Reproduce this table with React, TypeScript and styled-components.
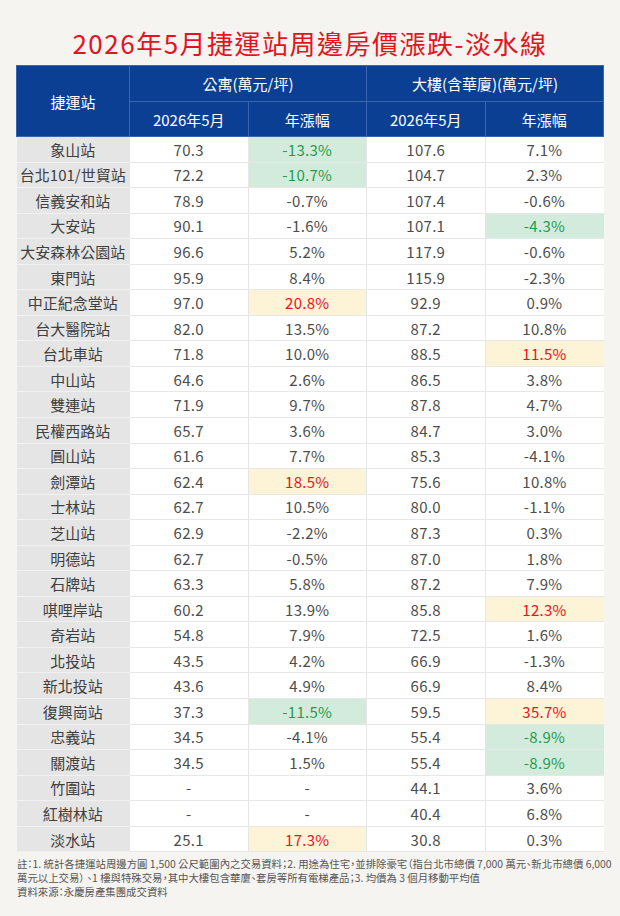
import React from 'react';
import styled, { createGlobalStyle } from 'styled-components';

const GlobalStyle = createGlobalStyle`
  html, body {
    margin: 0;
    padding: 0;
    background: #f5f4f0;
  }
  body {
    font-family: 'Noto Sans CJK TC', 'Noto Sans', sans-serif;
  }
`;

const Page = styled.div`
  width: 620px;
  height: 916px;
  background: #f5f4f0;
  padding-top: 24px;
  box-sizing: border-box;
  overflow: hidden;
`;

const Title = styled.h1`
  margin: 0 0 3px;
  height: 38px;
  line-height: 38px;
  text-align: center;
  font-size: 26px;
  font-weight: 400;
  letter-spacing: 1.5px;
  color: #e3131d;
`;

const Table = styled.table`
  margin: 0 0 0 16px;
  width: 588px;
  border-collapse: collapse;
  table-layout: fixed;
  font-size: 15px;
  text-align: center;

  thead {
    background: #0b3f93;
    color: #fff;
  }

  thead th {
    font-weight: 400;
    border: 1px solid #3a67ab;
    padding: 0;
  }

  thead tr:first-child th {
    height: 35px;
  }

  thead tr:nth-child(2) th {
    height: 34px;
  }
`;

const StationCell = styled.td`
  background: #e5e5e5;
  color: #404040;
  border-bottom: 1.5px solid #f1f1f1;
  padding: 0;
  height: 24.55px;
`;

type Mark = 'g' | 'y' | undefined;

const ValueCell = styled.td<{ $mark?: Mark }>`
  background: ${p => (p.$mark === 'g' ? '#d3ebdc' : p.$mark === 'y' ? '#fdf3d6' : '#fff')};
  color: ${p => (p.$mark === 'g' ? '#1f9d4c' : p.$mark === 'y' ? '#e8141d' : '#4d4d4d')};
  border-bottom: 1.5px solid #e7e7e7;
  border-left: 1px solid #e6e6e6;
  padding: 0;
  height: 24.55px;
  letter-spacing: 0.3px;
`;

const Notes = styled.div`
  margin: 5px 0 0 17px;
  width: 595px;
  font-size: 10.4px;
  line-height: 14px;
  color: #555;
  font-feature-settings: 'palt';
`;

const NoteLine = styled.div`
  white-space: nowrap;
`;

type Row = [string, string, string, string, string, Mark?, Mark?];

const rows: Row[] = [
  ['象山站', '70.3', '-13.3%', '107.6', '7.1%', 'g'],
  ['台北101/世貿站', '72.2', '-10.7%', '104.7', '2.3%', 'g'],
  ['信義安和站', '78.9', '-0.7%', '107.4', '-0.6%'],
  ['大安站', '90.1', '-1.6%', '107.1', '-4.3%', undefined, 'g'],
  ['大安森林公園站', '96.6', '5.2%', '117.9', '-0.6%'],
  ['東門站', '95.9', '8.4%', '115.9', '-2.3%'],
  ['中正紀念堂站', '97.0', '20.8%', '92.9', '0.9%', 'y'],
  ['台大醫院站', '82.0', '13.5%', '87.2', '10.8%'],
  ['台北車站', '71.8', '10.0%', '88.5', '11.5%', undefined, 'y'],
  ['中山站', '64.6', '2.6%', '86.5', '3.8%'],
  ['雙連站', '71.9', '9.7%', '87.8', '4.7%'],
  ['民權西路站', '65.7', '3.6%', '84.7', '3.0%'],
  ['圓山站', '61.6', '7.7%', '85.3', '-4.1%'],
  ['劍潭站', '62.4', '18.5%', '75.6', '10.8%', 'y'],
  ['士林站', '62.7', '10.5%', '80.0', '-1.1%'],
  ['芝山站', '62.9', '-2.2%', '87.3', '0.3%'],
  ['明德站', '62.7', '-0.5%', '87.0', '1.8%'],
  ['石牌站', '63.3', '5.8%', '87.2', '7.9%'],
  ['唭哩岸站', '60.2', '13.9%', '85.8', '12.3%', undefined, 'y'],
  ['奇岩站', '54.8', '7.9%', '72.5', '1.6%'],
  ['北投站', '43.5', '4.2%', '66.9', '-1.3%'],
  ['新北投站', '43.6', '4.9%', '66.9', '8.4%'],
  ['復興崗站', '37.3', '-11.5%', '59.5', '35.7%', 'g', 'y'],
  ['忠義站', '34.5', '-4.1%', '55.4', '-8.9%', undefined, 'g'],
  ['關渡站', '34.5', '1.5%', '55.4', '-8.9%', undefined, 'g'],
  ['竹圍站', '-', '-', '44.1', '3.6%'],
  ['紅樹林站', '-', '-', '40.4', '6.8%'],
  ['淡水站', '25.1', '17.3%', '30.8', '0.3%', 'y']
];

const App = () => {
  return (
    <Page>
      <GlobalStyle />
      <Title>2026年5月捷運站周邊房價漲跌-淡水線</Title>
      <Table>
        <colgroup>
          <col style={{ width: 113 }} />
          <col />
          <col />
          <col />
          <col />
        </colgroup>
        <thead>
          <tr>
            <th rowSpan={2}>捷運站</th>
            <th colSpan={2}>公寓(萬元/坪)</th>
            <th colSpan={2}>大樓(含華廈)(萬元/坪)</th>
          </tr>
          <tr>
            <th>2026年5月</th>
            <th>年漲幅</th>
            <th>2026年5月</th>
            <th>年漲幅</th>
          </tr>
        </thead>
        <tbody>
          {rows.map(([name, aPrice, aRate, bPrice, bRate, aMark, bMark]) => (
            <tr key={name}>
              <StationCell>{name}</StationCell>
              <ValueCell>{aPrice}</ValueCell>
              <ValueCell $mark={aMark}>{aRate}</ValueCell>
              <ValueCell>{bPrice}</ValueCell>
              <ValueCell $mark={bMark}>{bRate}</ValueCell>
            </tr>
          ))}
        </tbody>
      </Table>
      <Notes>
        <NoteLine>
          註：1. 統計各捷運站周邊方圓 1,500 公尺範圍內之交易資料；2. 用途為住宅，並排除豪宅（指台北市總價 7,000 萬元、新北市總價 6,000
        </NoteLine>
        <NoteLine>萬元以上交易） 、1 樓與特殊交易，其中大樓包含華廈、套房等所有電梯產品；3. 均價為 3 個月移動平均值</NoteLine>
        <NoteLine>資料來源：永慶房產集團成交資料</NoteLine>
      </Notes>
    </Page>
  );
};

export default App;
